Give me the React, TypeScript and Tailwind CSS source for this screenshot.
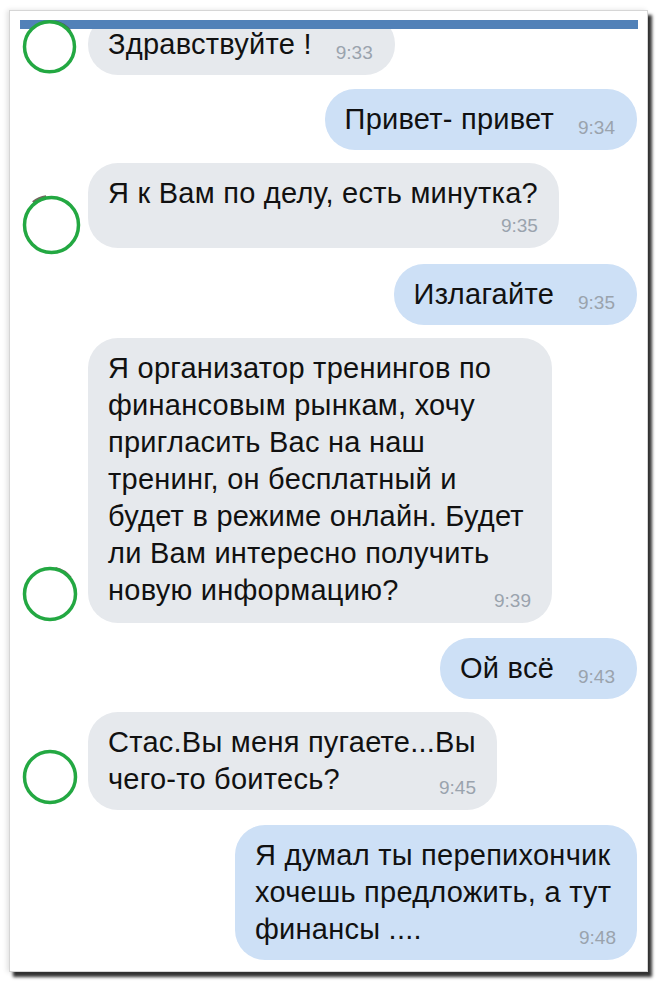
import React from "react";

type Msg = {
  side: "in" | "out";
  lines: string[];
  time: string;
  mt: string;
  width?: string;
  pb?: string;
  timeBelow?: boolean;
  ring?: { mb: string; rx: number; ry: number; sliver?: "tr" | "tl" };
};

const messages: Msg[] = [
  { side: "in", lines: ["Здравствуйте !"], time: "9:33", mt: "mt-0", ring: { mb: "mb-[1px]", rx: 25, ry: 25, sliver: "tr" } },
  { side: "out", lines: ["Привет- привет"], time: "9:34", mt: "mt-[14px]" },
  { side: "in", lines: ["Я к Вам по делу, есть минутка?"], time: "9:35", mt: "mt-[13px]", timeBelow: true, ring: { mb: "mb-[-3px]", rx: 27, ry: 27.5, sliver: "tl" } },
  { side: "out", lines: ["Излагайте"], time: "9:35", mt: "mt-[16px]" },
  {
    side: "in",
    lines: [
      "Я организатор тренингов по",
      "финансовым рынкам, хочу",
      "пригласить Вас на наш",
      "тренинг, он бесплатный и",
      "будет в режиме онлайн. Будет",
      "ли Вам интересно получить",
      "новую информацию?",
    ],
    time: "9:39",
    mt: "mt-[13px]",
    width: "w-[464px]",
    pb: "pb-[14px]",
    ring: { mb: "mb-[2px]", rx: 25.5, ry: 25.5, sliver: "tr" },
  },
  { side: "out", lines: ["Ой всё"], time: "9:43", mt: "mt-[15px]" },
  {
    side: "in",
    lines: ["Стас.Вы меня пугаете...Вы", "чего-то боитесь?"],
    time: "9:45",
    mt: "mt-[13px]",
    width: "w-[409px]",
    ring: { mb: "mb-[6px]", rx: 25.5, ry: 25.5 },
  },
  {
    side: "out",
    lines: ["Я думал ты перепихончик", "хочешь предложить, а тут", "финансы ...."],
    time: "9:48",
    mt: "mt-[15px]",
    width: "w-[402px]",
  },
];

// Green marker ring drawn over a hidden avatar, with a sliver of the photo peeking out.
function Ring({ rx, ry, sliver }: { rx: number; ry: number; sliver?: "tr" | "tl" }) {
  const cx = 27;
  const cy = 27;
  const arc = (a0: number, a1: number, r: number) => {
    const p = (a: number) => {
      const t = (a * Math.PI) / 180;
      return `${cx + r * Math.cos(t)} ${cy + r * Math.sin(t)}`;
    };
    return `M ${p(a0)} A ${r} ${r} 0 0 1 ${p(a1)}`;
  };
  return (
    <svg width="54" height="54" viewBox="0 0 54 54" className="absolute left-0 top-0 overflow-visible">
      {sliver === "tr" && (
        <path d={arc(-78, -38, rx + 0.5)} fill="none" stroke="#5b4a42" strokeWidth="3" opacity="0.85" />
      )}
      {sliver === "tl" && (
        <path d={arc(-128, -98, rx + 0.5)} fill="none" stroke="#5b4a42" strokeWidth="3" opacity="0.85" />
      )}
      <ellipse cx={cx + (rx - 25.5)} cy={cy + (ry - 25.5) / 2} rx={rx} ry={ry} fill="white" stroke="#23a842" strokeWidth="3.5" />
    </svg>
  );
}

function Bubble({ m }: { m: Msg }) {
  const bg = m.side === "in" ? "bg-[#e6e9ed]" : "bg-[#cde0f6]";
  const time = "text-[19px] text-[#9aa3ad] leading-[19px] tracking-normal";
  if (m.lines.length > 1) {
    return (
      <div className={`relative rounded-[30px] pl-[20px] pr-[20px] pt-[12px] whitespace-nowrap ${m.pb ?? "pb-[12px]"} ${bg} ${m.width ?? ""}`}>
        {m.lines.map((l, i) => (
          <div key={i}>{l}</div>
        ))}
        <span className={`absolute right-[21px] bottom-[13px] ${time}`}>{m.time}</span>
      </div>
    );
  }
  if (m.timeBelow) {
    return (
      <div className={`rounded-[30px] pl-[20px] pr-[21px] pt-[12px] pb-[13px] whitespace-nowrap ${bg}`}>
        <div>{m.lines[0]}</div>
        <div className={`text-right pt-[4px] ${time}`}>{m.time}</div>
      </div>
    );
  }
  return (
    <div className={`rounded-[30px] pl-[20px] pr-[22px] py-[12px] whitespace-nowrap ${bg}`}>
      <span>{m.lines[0]}</span>
      <span className={`relative top-[5px] ml-[24px] ${time}`}>{m.time}</span>
    </div>
  );
}

export default function App() {
  return (
    <div className="w-[660px] h-[984px] bg-white overflow-hidden pt-[10px] pl-[9px]">
      <div className="relative w-[639px] h-[962px] bg-white border border-[#d6d6d6] overflow-hidden shadow-[4px_5px_3px_rgba(0,0,0,0.8),-2px_0_5px_rgba(0,0,0,0.12)] font-['Liberation_Sans',Arial,sans-serif] text-[29px] tracking-[0.25px] leading-[37px] text-[#111]">
        {/* top of the chat header with the blue strip */}
        <div className="absolute left-0 right-0 top-0 h-[9px] bg-white z-10" />
        <div className="absolute left-[10px] right-[9px] top-[9px] h-[9px] bg-[#5181b8] z-10" />

        <div className="flex flex-col pt-[3px] pl-[13px] pr-[10px]">
          {messages.map((m, i) =>
            m.side === "in" ? (
              <div key={i} className={`flex items-end gap-[11px] ${m.mt}`}>
                <div className={`relative z-20 w-[54px] h-[54px] shrink-0 ${m.ring?.mb ?? ""}`}>
                  {m.ring && <Ring rx={m.ring.rx} ry={m.ring.ry} sliver={m.ring.sliver} />}
                </div>
                <Bubble m={m} />
              </div>
            ) : (
              <div key={i} className={`flex justify-end ${m.mt}`}>
                <Bubble m={m} />
              </div>
            )
          )}
        </div>
      </div>
    </div>
  );
}
